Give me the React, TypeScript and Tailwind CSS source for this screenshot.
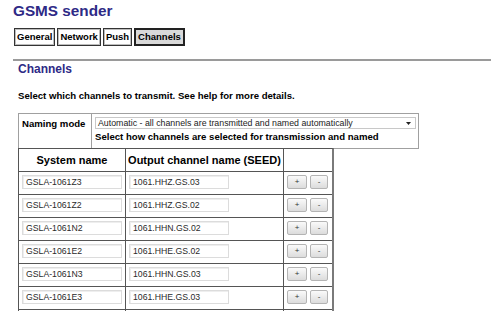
const tabs = [
  { label: "General", active: false },
  { label: "Network", active: false },
  { label: "Push", active: false },
  { label: "Channels", active: true },
];

const channels = [
  { system: "GSLA-1061Z3", output: "1061.HHZ.GS.03" },
  { system: "GSLA-1061Z2", output: "1061.HHZ.GS.02" },
  { system: "GSLA-1061N2", output: "1061.HHN.GS.02" },
  { system: "GSLA-1061E2", output: "1061.HHE.GS.02" },
  { system: "GSLA-1061N3", output: "1061.HHN.GS.03" },
  { system: "GSLA-1061E3", output: "1061.HHE.GS.03" },
];

const SmallButton = ({ label, w }: { label: string; w: string }) => (
  <button
    className={`${w} h-[14px] rounded-[2px] border border-[#b4b4b4] bg-gradient-to-b from-[#fafafa] to-[#dcdcdc] text-[8px] leading-[12px] text-[#333] flex items-center justify-center`}
  >
    {label}
  </button>
);

const TextBox = ({ value }: { value: string }) => (
  <div className="w-[100px] h-[14px] border border-[#dcdcdc] shadow-[inset_1px_1px_0_#eeeeee] bg-white pl-[3px] text-[8.7px] leading-[12px] text-[#2a2a2a] font-normal">
    {value}
  </div>
);

export default function App() {
  return (
    <div className="h-screen overflow-hidden bg-white text-black font-['Liberation_Sans',Arial,sans-serif]">
      <div className="pl-[13px] pt-[2px]">
        <h1 className="text-[15.3px] leading-[18px] font-bold text-[#2e2a86]">GSMS sender</h1>

        <nav className="mt-[8px] ml-[1px] flex gap-[2px]">
          {tabs.map((t) => (
            <div
              key={t.label}
              className={
                t.active
                  ? "h-[18px] px-[2px] border-2 border-[#222] bg-[#d9d9d9] text-[9.5px] leading-[14px] font-bold"
                  : "h-[18px] px-[2px] border border-[#333] shadow-[inset_1px_1px_0_#bdbdbd,inset_-1px_-1px_0_#bdbdbd] bg-white text-[9.5px] leading-[16px] font-bold"
              }
            >
              {t.label}
            </div>
          ))}
        </nav>

        <div className="mt-[13px] h-[2px] bg-[#9a9a9a]" />

        <div className="pl-[5px]">
          <h2 className="mt-[1px] text-[12px] leading-[14px] font-bold text-[#2e2a86]">Channels</h2>
          <p className="mt-[14px] text-[9.6px] leading-[12px] font-bold">
            Select which channels to transmit. See help for more details.
          </p>

          <div className="mt-[11px] w-[401px] h-[36px] flex border border-[#a0a0a0]">
            <div className="w-[73px] border-r border-[#a0a0a0] pl-[3px] pt-[4px] text-[9.6px] leading-[12px] font-bold">
              Naming mode
            </div>
            <div className="flex-1 pl-[3px] pt-[3px] pr-[2px]">
              <div className="h-[12px] border border-[#c8c8c8] bg-white flex items-center justify-between pl-[2px] pr-[4px] text-[8.8px] leading-[10px] text-[#222]">
                <span>Automatic - all channels are transmitted and named automatically</span>
                <svg width="5" height="3" viewBox="0 0 5 3">
                  <path d="M0 0h5L2.5 3z" fill="#222" />
                </svg>
              </div>
              <div className="mt-[2px] text-[9.6px] leading-[12px] font-bold">
                Select how channels are selected for transmission and named
              </div>
            </div>
          </div>

          <div className="-mt-px w-[316px] border-l border-t border-r-2 border-[#555] border-r-[#7a7a7a]">
            <div className="grid grid-cols-[107px_158px_48px] h-[23px] border-b border-[#555] text-[11px] font-bold">
              <div className="border-r border-[#555] flex items-center justify-center">System name</div>
              <div className="border-r border-[#555] flex items-center justify-center">Output channel name (SEED)</div>
              <div />
            </div>
            {channels.map((c) => (
              <div key={c.system} className="grid grid-cols-[107px_158px_48px] h-[23px] border-b border-[#555]">
                <div className="border-r border-[#555] pl-[3px] pt-[3px]">
                  <TextBox value={c.system} />
                </div>
                <div className="border-r border-[#555] pl-[3px] pt-[3px]">
                  <TextBox value={c.output} />
                </div>
                <div className="pl-[3px] pt-[3px] flex gap-[3px]">
                  <SmallButton label="+" w="w-[20px]" />
                  <SmallButton label="-" w="w-[18px]" />
                </div>
              </div>
            ))}
            <div className="grid grid-cols-[107px_158px_48px] h-[23px]">
              <div className="border-r border-[#555]" />
              <div className="border-r border-[#555]" />
              <div />
            </div>
          </div>
        </div>
      </div>
    </div>
  );
}
